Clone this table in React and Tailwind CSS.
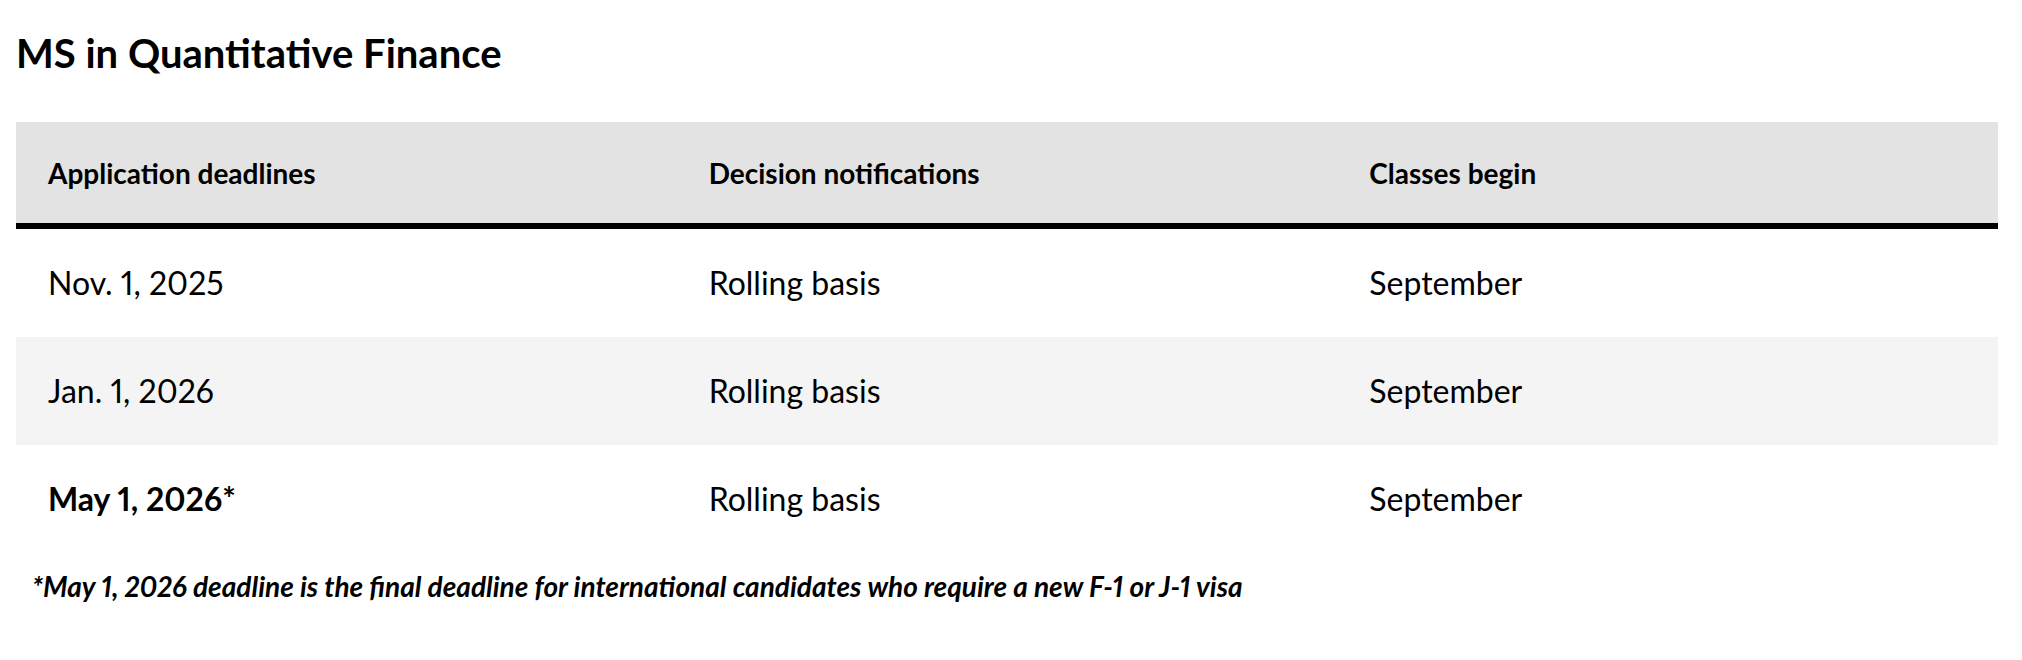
const ROWS = [
  { deadline: 'Nov. 1, 2025', decision: 'Rolling basis', begin: 'September', bg: 'bg-white' },
  { deadline: 'Jan. 1, 2026', decision: 'Rolling basis', begin: 'September', bg: 'bg-[#f4f4f4]' },
  { deadline: 'May 1, 2026*', decision: 'Rolling basis', begin: 'September', bg: 'bg-white', bold: true },
]

export default function App() {
  return (
    <div className="min-h-screen bg-white pl-4 pr-6 pt-[29px] text-black font-['Lato','Noto_Sans',sans-serif] proportional-nums">
      <h2 className="text-[40px] font-bold leading-[48px]">MS in Quantitative Finance</h2>

      <table className="mt-[45px] w-full table-fixed border-separate border-spacing-0">
        <thead>
          <tr className="bg-[#e3e3e3]">
            <th className="w-1/3 h-[107px] pl-8 border-b-[6px] border-black text-left align-middle text-[28px] font-bold">Application deadlines</th>
            <th className="w-1/3 h-[107px] pl-8 border-b-[6px] border-black text-left align-middle text-[28px] font-bold">Decision notifications</th>
            <th className="w-1/3 h-[107px] pl-8 border-b-[6px] border-black text-left align-middle text-[28px] font-bold">Classes begin</th>
          </tr>
        </thead>
        <tbody>
          {ROWS.map(r => (
            <tr key={r.deadline} className={r.bg}>
              <td className={`h-[108px] pl-8 align-middle text-[32px] ${r.bold ? 'font-bold' : 'font-normal'}`}>{r.deadline}</td>
              <td className="h-[108px] pl-8 align-middle text-[32px]">{r.decision}</td>
              <td className="h-[108px] pl-8 align-middle text-[32px]">{r.begin}</td>
            </tr>
          ))}
        </tbody>
      </table>

      <p className="mt-[12px] px-4 text-[28px] font-bold italic">
        *May 1, 2026 deadline is the final deadline for international candidates who require a new F-1 or J-1 visa
      </p>
    </div>
  )
}
